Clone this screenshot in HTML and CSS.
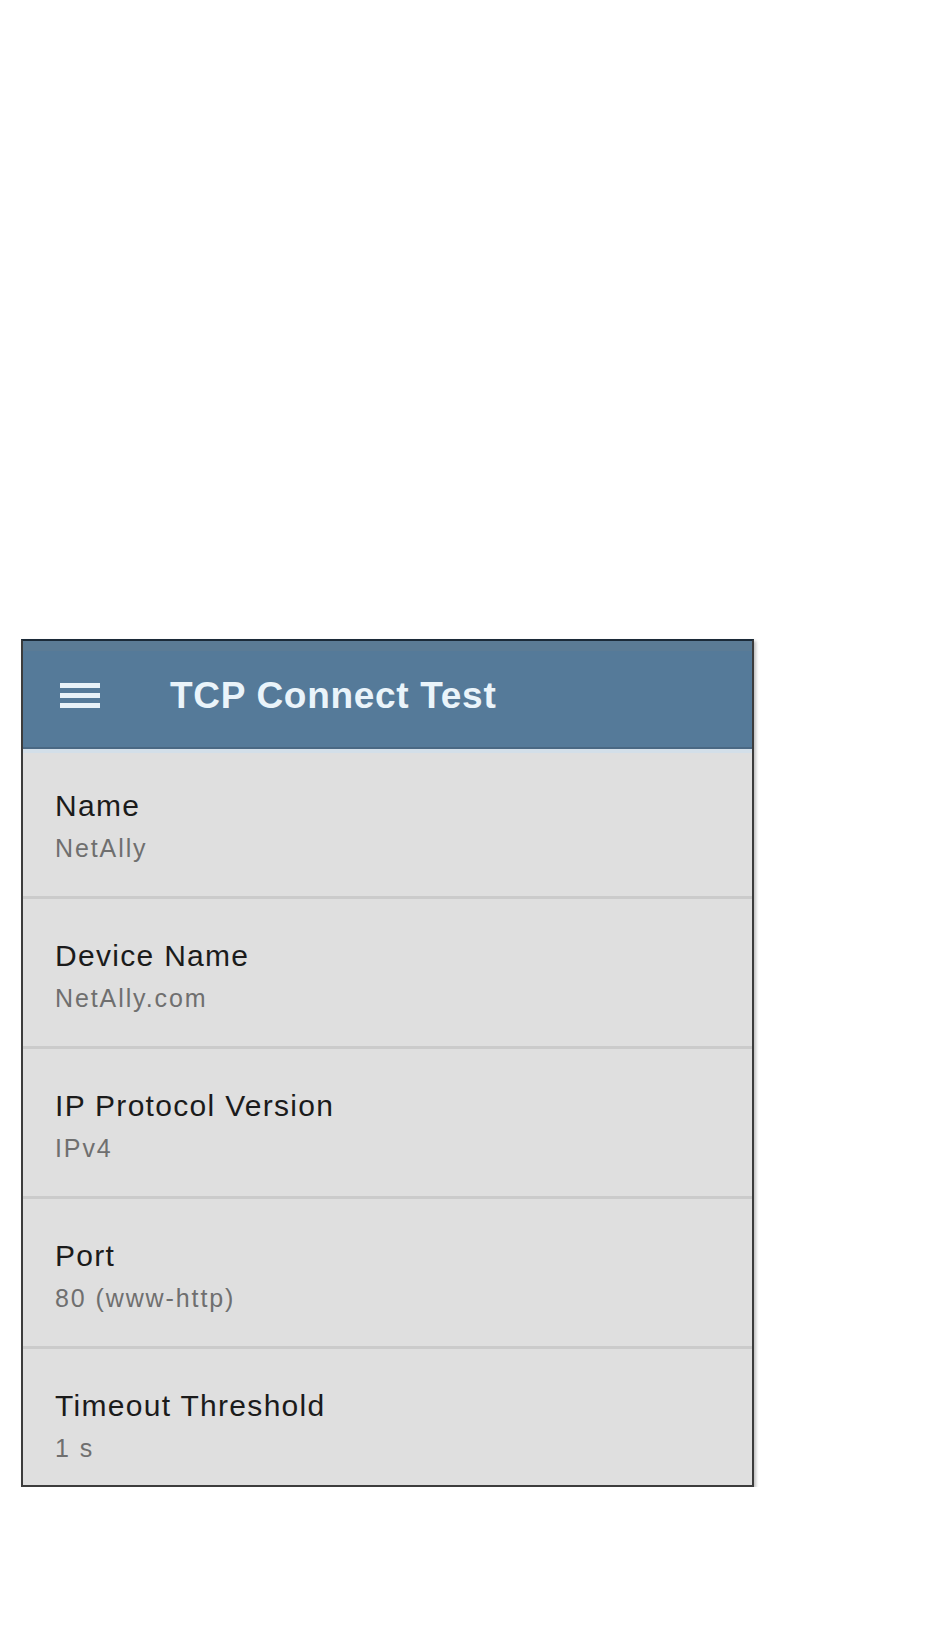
FILE: index.html
```html
<!DOCTYPE html>
<html>
<head>
  <link rel="stylesheet" href="styles.css">
  <meta charset="UTF-8">
  <meta name="viewport" content="width=device-width, initial-scale=1.0">
  <title>TCP Connect Test</title>
</head>
<body>

  <div class="panel">
    <div class="header">
      <svg class="menu" width="40" height="25" viewBox="0 0 40 25">
        <rect x="0" y="0" width="40" height="5" fill="#e8f2f8"/>
        <rect x="0" y="10" width="40" height="5" fill="#e8f2f8"/>
        <rect x="0" y="20" width="40" height="5" fill="#e8f2f8"/>
      </svg>
      <h1>TCP Connect Test</h1>
    </div>

    <div class="row">
      <p class="label">Name</p>
      <p class="value">NetAlly</p>
    </div>
    <div class="row">
      <p class="label">Device Name</p>
      <p class="value">NetAlly.com</p>
    </div>
    <div class="row">
      <p class="label">IP Protocol Version</p>
      <p class="value">IPv4</p>
    </div>
    <div class="row">
      <p class="label">Port</p>
      <p class="value">80 (www-http)</p>
    </div>
    <div class="row">
      <p class="label">Timeout Threshold</p>
      <p class="value">1 s</p>
    </div>
  </div>

</body>
</html>
```

FILE: styles.css
```css
  body {
    margin: 0;
    background-color: #ffffff;
    font-family: "Liberation Sans", Arial, sans-serif;
  }

  .panel {
    width: 729px;
    margin: 639px 0 0 21px;
    background-color: #dfdfdf;
    border: 2px solid #3c3c3c;
    border-top-color: #1b2a38;
    box-shadow: 2px 2px 3px rgba(0, 0, 0, 0.25);
  }

  .header {
    display: flex;
    align-items: center;
    gap: 70px;
    height: 108px;
    padding-left: 37px;
    background-color: #557a99;
    border-bottom: 4px solid #d3dfe9;
    box-shadow: inset 0 -2px 0 #4a6883, inset 0 10px 0 #5b7b95;
  }

  .header h1 {
    margin: 2px 0 0 0;
    color: #eaf4fa;
    font-size: 37px;
    font-weight: bold;
    letter-spacing: 0.7px;
  }

  .menu {
    display: block;
  }

  .row {
    display: flex;
    flex-direction: column;
    gap: 10px;
    padding: 40px 32px 33px 32px;
    border-bottom: 3px solid #cbcbcb;
  }

  .header + .row {
    padding-top: 36px;
  }

  .row:last-child {
    border-bottom: none;
    padding-bottom: 22px;
  }

  .label {
    margin: 0;
    color: #1b1b1b;
    font-size: 30px;
    line-height: 34px;
    letter-spacing: 1.3px;
  }

  .value {
    margin: 0;
    color: #6f6f6f;
    font-size: 25px;
    line-height: 30px;
    letter-spacing: 1.9px;
  }
```
